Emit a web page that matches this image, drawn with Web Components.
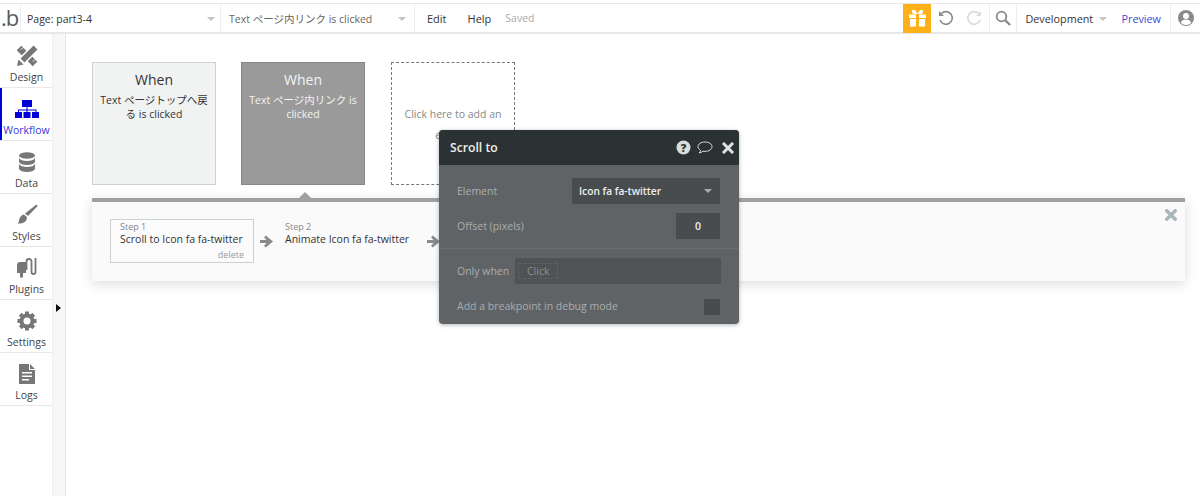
<!DOCTYPE html>
<html>
<head>
<meta charset="utf-8">
<style>
  html, body { margin: 0; height: 100%; background: #fff; overflow: hidden; }
  body { font-family: "Open Sans", "Noto Sans CJK JP", sans-serif; color: #333; }
</style>
</head>
<body>
<app-shell>
  <top-bar slot="top"></top-bar>
  <side-nav slot="side">
    <nav-item label="Design" icon="design"></nav-item>
    <nav-item label="Workflow" icon="workflow" active></nav-item>
    <nav-item label="Data" icon="data"></nav-item>
    <nav-item label="Styles" icon="styles"></nav-item>
    <nav-item label="Plugins" icon="plugins"></nav-item>
    <nav-item label="Settings" icon="settings"></nav-item>
    <nav-item label="Logs" icon="logs"></nav-item>
  </side-nav>
  <workflow-canvas slot="main">
    <event-card slot="events" title="When">Text ページトップへ戻る is clicked</event-card>
    <event-card slot="events" title="When" selected>Text ページ内リンク is clicked</event-card>
    <event-card slot="events" empty>Click here to add an event...</event-card>
    <step-panel slot="panel">
      <step-item step="Step 1" selected>Scroll to Icon fa fa-twitter</step-item>
      <step-item step="Step 2">Animate Icon fa fa-twitter</step-item>
    </step-panel>
    <action-dialog slot="dialog" title="Scroll to"></action-dialog>
  </workflow-canvas>
</app-shell>

<script>
const GRAY = '#777';
const ICONS = {
  design: `<svg width="22" height="22" viewBox="0 0 22 22"><path d="M3 3l16 16" stroke="${GRAY}" stroke-width="6.500"/><path d="M7 2.500l-2 2M11 6.500l-2 2M15 10.500l-2 2M19 14.500l-2 2" stroke="#fff" stroke-width="1"/><path d="M19 3L6 16" stroke="#fff" stroke-width="8.500"/><path d="M19.500 2.500L6.500 15.500" stroke="${GRAY}" stroke-width="5.500"/><path d="M1 21l1.500-6.500 5 5z" fill="${GRAY}"/></svg>`,
  workflow: `<svg width="24" height="20" viewBox="0 0 24 20"><g fill="#0000d8"><rect x="7" y="1" width="10" height="7"/><rect x="0" y="13" width="7" height="6"/><rect x="8.500" y="13" width="7" height="6"/><rect x="17" y="13" width="7" height="6"/><path d="M11.500 8h1v2.500h9V13h-1v-1.500h-8V13h-1v-1.500H4V13H3v-2.500h8.500z"/></g></svg>`,
  data: `<svg width="18" height="21" viewBox="0 0 18 21"><g fill="${GRAY}"><ellipse cx="9" cy="3.500" rx="8" ry="3.200"/><path d="M1 6c1 2 4 3 8 3s7-1 8-3v4c-1 2-4 3-8 3s-7-1-8-3z"/><path d="M1 12c1 2 4 3 8 3s7-1 8-3v5c-1 2-4 3-8 3s-7-1-8-3z"/></g></svg>`,
  styles: `<svg width="22" height="22" viewBox="0 0 22 22"><g fill="${GRAY}"><path d="M21 1c.6.400.6 1 .2 1.600L12 12l-3-2.500L19.500 1.200c.5-.4 1-.5 1.500-.2z"/><path d="M8 10.500l3 2.700c0 3.800-3 6.800-9.500 6.300 2-1.200 1-3.500 2.500-6 1-1.600 2.500-2.700 4-3z"/></g></svg>`,
  plugins: `<svg width="22" height="22" viewBox="0 0 22 22"><path fill="${GRAY}" d="M1 8q0-3 3-3h6v11H7v4.500H4V16H1z"/><path d="M10.500 13V4.500a2.500 2.500 0 0 1 5 0V15a2 2 0 0 0 4 0V1" fill="none" stroke="${GRAY}" stroke-width="1.800"/></svg>`,
  settings: `<svg width="20" height="20" viewBox="0 0 20 20"><circle cx="10" cy="10" r="5.500" fill="none" stroke="${GRAY}" stroke-width="4"/><g fill="${GRAY}">${[0, 45, 90, 135, 180, 225, 270, 315].map(a => `<rect x="8" y="0.500" width="4" height="4" transform="rotate(${a} 10 10)"/>`).join('')}</g></svg>`,
  logs: `<svg width="16" height="20" viewBox="0 0 16 20"><path fill="${GRAY}" fill-rule="evenodd" d="M0 0h10v6h6v14H0zM3 8v1.500h10V8zM3 11.500V13h10v-1.500zM3 15v1.500h7V15zM11 0l5 5h-5z"/></svg>`
};

class AppShell extends HTMLElement {
  constructor() {
    super();
    this.attachShadow({ mode: 'open' });
    this.shadowRoot.innerHTML = `
      <style>
        :host { display: block; width: 1200px; height: 496px; padding-top: 3px; box-sizing: border-box; background: #fff; }
        .body { display: flex; height: 462px; }
        .gutter { flex: none; width: 12px; background: #f7f7f7; border-right: 1px solid #e6e6e6; position: relative; }
        .gutter::after {
          content: ''; position: absolute; left: 3px; top: 270px;
          border-left: 5px solid #111; border-top: 4px solid transparent; border-bottom: 4px solid transparent;
        }
        .main { flex: 1; min-width: 0; }
      </style>
      <slot name="top"></slot>
      <div class="body">
        <slot name="side"></slot>
        <div class="gutter"></div>
        <div class="main"><slot name="main"></slot></div>
      </div>
    `;
  }
}
customElements.define('app-shell', AppShell);

class TopBar extends HTMLElement {
  constructor() {
    super();
    this.attachShadow({ mode: 'open' });
    this.shadowRoot.innerHTML = `
      <style>
        :host {
          display: flex; align-items: stretch; height: 31px; box-sizing: border-box;
          border-top: 1px solid #e8e8e8; border-bottom: 2px solid #e8e8e8;
          font-size: 11px; color: #333; background: #fff;
        }
        .logo { width: 21px; flex: none; box-sizing: border-box; border-right: 1px solid #eee;
          font: 400 22px/26px "Open Sans", sans-serif; color: #5a5a5a; padding-left: 1px; letter-spacing: -1px; }
        .drop { flex: none; display: flex; align-items: center; justify-content: space-between; box-sizing: border-box; border-right: 1px solid #eee; font-size: 10.500px; padding-top: 1px; }
        .page { width: 200px; padding-left: 6px; padding-right: 5px; }
        .event { width: 194px; padding-left: 8px; padding-right: 8px; color: #666; }
        .caret { width: 0; height: 0; border-left: 4px solid transparent; border-right: 4px solid transparent; border-top: 4px solid #c4c4c4; margin-top: 1px; }
        .menu { flex: none; }
        .edit { margin-left: 12px; }
        .help { margin-left: 21px; }
        .saved { margin-left: 14px; color: #aaa; font-size: 10.500px; }
        .menu, .saved { align-self: center; }
        .spacer { flex: 1; }
        .gift { flex: none; width: 28px; background: #fdb01a; display: flex; align-items: center; justify-content: center; margin-bottom: -1px; }
        .ico { flex: none; display: flex; align-items: center; justify-content: center; }
        .undo { width: 28px; margin-left: 1px; }
        .redo { width: 28px; }
        .search { width: 26px; margin-left: 1px; border-left: 1px solid #eee; border-right: 1px solid #eee; }
        .dev { flex: none; width: 96px; padding: 0 6px 0 8px; box-sizing: border-box; color: #333; display: flex; align-items: center; justify-content: space-between; font-size: 10.800px; }
        .preview { flex: none; align-self: center; color: #3f47d4; margin-left: 8px; font-size: 10.800px; }
        .user { flex: none; width: 29px; margin-left: 9px; border-left: 1px solid #eee; display: flex; align-items: center; justify-content: center; }
      </style>
      <div class="logo">.b</div>
      <div class="drop page"><span>Page: part3-4</span><i class="caret"></i></div>
      <div class="drop event"><span>Text ページ内リンク is clicked</span><i class="caret"></i></div>
      <span class="menu edit">Edit</span>
      <span class="menu help">Help</span>
      <span class="saved">Saved</span>
      <div class="spacer"></div>
      <div class="gift">
        <svg width="19" height="19" viewBox="0 0 19 19"><g fill="#fff"><path d="M1 5.500h7v3.500H1zM11 5.500h7v3.500h-7zM2 10h6v7.500H2zM11 10h6v7.500h-6z"/><path d="M9.500 5C8 1.500 6.500.500 5 .800 3.200 1.200 3.500 4.500 6 5zM9.500 5C11 1.500 12.500.500 14 .800c1.800.4 1.500 3.700-1 4.200z"/></g></svg>
      </div>
      <div class="ico undo"><svg width="16" height="16" viewBox="0 0 16 16"><path d="M3.500 3.500A6.300 6.300 0 1 1 2 10" fill="none" stroke="#8c8c8c" stroke-width="1.600"/><path d="M1 1v5h5z" fill="#8c8c8c"/></svg></div>
      <div class="ico redo"><svg width="16" height="16" viewBox="0 0 16 16"><path d="M12.500 3.500A6.300 6.300 0 1 0 14 10" fill="none" stroke="#dadada" stroke-width="1.600"/><path d="M15 1v5h-5z" fill="#dadada"/></svg></div>
      <div class="ico search"><svg width="16" height="16" viewBox="0 0 16 16"><circle cx="6.500" cy="6.500" r="4.800" fill="none" stroke="#8a8a8a" stroke-width="1.800"/><path d="M10 10l5 5" stroke="#8a8a8a" stroke-width="2.400"/></svg></div>
      <div class="dev"><span>Development</span><i class="caret"></i></div>
      <span class="preview">Preview</span>
      <div class="user"><svg width="16" height="16" viewBox="0 0 16 16"><circle cx="8" cy="8" r="8" fill="#8a8a8a"/><circle cx="8" cy="6" r="3" fill="#fff"/><path d="M2.800 13c.6-2.500 2.600-3.500 5.200-3.500s4.600 1 5.200 3.500A7 7 0 0 1 8 15a7 7 0 0 1-5.200-2z" fill="#fff"/></svg></div>
    `;
  }
}
customElements.define('top-bar', TopBar);

class SideNav extends HTMLElement {
  constructor() {
    super();
    this.attachShadow({ mode: 'open' });
    this.shadowRoot.innerHTML = `
      <style>
        :host { display: flex; flex-direction: column; flex: none; width: 52px; background: #fff; border-right: 1px solid #eee; padding-top: 1px; }
      </style>
      <slot></slot>
    `;
  }
}
customElements.define('side-nav', SideNav);

class NavItem extends HTMLElement {
  connectedCallback() {
    if (this.shadowRoot) return;
    this.attachShadow({ mode: 'open' });
    this.shadowRoot.innerHTML = `
      <style>
        :host { display: block; height: 53px; box-sizing: border-box; border-bottom: 1px solid #e8e8e8; position: relative; }
        .wrap { display: flex; flex-direction: column; align-items: center; height: 100%; padding-left: 1px; box-sizing: border-box; }
        .icon { height: 24px; margin-top: 9px; display: flex; align-items: center; justify-content: center; }
        .label { font-size: 10.500px; line-height: 14px; margin-top: 2px; color: #444; white-space: nowrap; }
        :host([active]) .label { color: #3a3ad8; }
        :host([active])::before { content: ''; position: absolute; left: 0; top: 0; bottom: 0; width: 2px; background: #0000d8; }
      </style>
      <div class="wrap">
        <div class="icon">${ICONS[this.getAttribute('icon')]}</div>
        <div class="label">${this.getAttribute('label')}</div>
      </div>
    `;
  }
}
customElements.define('nav-item', NavItem);

class WorkflowCanvas extends HTMLElement {
  constructor() {
    super();
    this.attachShadow({ mode: 'open' });
    this.shadowRoot.innerHTML = `
      <style>
        :host { display: block; position: relative; height: 100%; padding: 28px 15px 0 26px; box-sizing: border-box; }
        .events { display: flex; gap: 25px; }
        .panel { margin-top: 13px; }
        ::slotted([slot="dialog"]) { position: absolute; left: 373px; top: 96px; }
      </style>
      <div class="events"><slot name="events"></slot></div>
      <div class="panel"><slot name="panel"></slot></div>
      <slot name="dialog"></slot>
    `;
  }
}
customElements.define('workflow-canvas', WorkflowCanvas);

class EventCard extends HTMLElement {
  connectedCallback() {
    if (this.shadowRoot) return;
    this.attachShadow({ mode: 'open' });
    const title = this.getAttribute('title');
    this.shadowRoot.innerHTML = `
      <style>
        :host {
          display: block; width: 124px; height: 123px; box-sizing: border-box; text-align: center;
          border: 1px solid #c9d2d4; background: #f1f3f2; color: #333; padding: 0 5px;
          font-size: 10.500px; line-height: 14px;
        }
        :host([selected]) { background: #9a9a9a; border-color: #888; color: #f4f4f4; }
        :host([empty]) { background: #fff; border: 1px dashed #777; color: #888; padding: 41px 8px 0; line-height: 21px; margin-left: 1px; }
        .title { font-size: 14px; line-height: 20px; margin-top: 7px; margin-bottom: 3px; }
      </style>
      ${title ? `<div class="title">${title}</div>` : ''}
      <slot></slot>
    `;
  }
}
customElements.define('event-card', EventCard);

class StepPanel extends HTMLElement {
  constructor() {
    super();
    this.attachShadow({ mode: 'open' });
    this.shadowRoot.innerHTML = `
      <style>
        :host {
          display: block; position: relative; height: 83px; box-sizing: border-box;
          background: #fafafa; border-top: 4px solid #a0a0a0; padding: 17px 18px 0;
          box-shadow: 0 3px 12px rgba(0,0,0,.14);
        }
        .notch { position: absolute; left: 207px; top: -10px; border-left: 6px solid transparent; border-right: 6px solid transparent; border-bottom: 6px solid #a0a0a0; }
        .steps { display: flex; }
        .close { position: absolute; right: 8px; top: 7px; }
      </style>
      <i class="notch"></i>
      <div class="steps"><slot></slot></div>
      <svg class="close" width="12" height="12" viewBox="0 0 12 12"><path d="M1.800 1.800l8.400 8.400M10.200 1.800l-8.400 8.400" stroke="#a9b6ba" stroke-width="3.400" stroke-linecap="square"/></svg>
    `;
  }
}
customElements.define('step-panel', StepPanel);

class StepItem extends HTMLElement {
  connectedCallback() {
    if (this.shadowRoot) return;
    this.attachShadow({ mode: 'open' });
    const selected = this.hasAttribute('selected');
    this.shadowRoot.innerHTML = `
      <style>
        :host { display: flex; align-items: center; }
        .box { width: 144px; height: 44px; box-sizing: border-box; padding: 1px 9px 0; border: 1px solid transparent; position: relative; font-size: 10.500px; line-height: 14px; color: #333; white-space: nowrap; }
        :host([selected]) .box { border-color: #c9d2d4; background: #fbfbfb; }
        .num { font-size: 9px; line-height: 11px; color: #888; }
        .del { position: absolute; right: 9px; bottom: 2px; font-size: 9px; line-height: 11px; color: #999; }
        .arrow { margin: 0 11px 0 6px; flex: none; }
        :host(:not([selected])) .box { width: 143px; padding-left: 0; }
        :host(:not([selected])) .arrow { margin-left: 0; }
      </style>
      <div class="box">
        <div class="num">${this.getAttribute('step')}</div>
        <div><slot></slot></div>
        ${selected ? '<div class="del">delete</div>' : ''}
      </div>
      <svg class="arrow" width="13" height="13" viewBox="0 0 13 13"><path d="M0 5h6.500L4 2.300 5.800.600 13 6.500 5.800 12.400 4 10.700 6.500 8H0z" fill="#8a8a8a"/></svg>
    `;
  }
}
customElements.define('step-item', StepItem);

class ActionDialog extends HTMLElement {
  connectedCallback() {
    if (this.shadowRoot) return;
    this.attachShadow({ mode: 'open' });
    this.shadowRoot.innerHTML = `
      <style>
        :host {
          display: block; width: 300px; height: 194px; box-sizing: border-box; border-radius: 4px; overflow: hidden;
          background: #5f6366; color: #a9adaf; font-size: 10.500px; box-shadow: 0 1px 4px rgba(0,0,0,.3);
        }
        header { display: flex; align-items: center; height: 35px; padding: 0 5px 0 11px; background: #2b3233; color: #eef0f0; font-size: 12.200px; font-weight: 600; }
        header .t { flex: 1; }
        .q { margin-right: 6px; }
        .c { margin-right: 9px; }
        .row { display: flex; align-items: center; justify-content: space-between; padding: 0 19px 0 18px; }
        .r1 { margin-top: 13px; height: 26px; }
        .r2 { margin-top: 9px; height: 26px; }
        .r3 { margin-top: 9px; padding-top: 9px; padding-right: 18px; height: 26px; border-top: 1px solid #6a6e71; }
        .r4 { margin-top: 15px; height: 16px; }
        .r4 > span { margin-bottom: 2px; }
        .select { width: 148px; height: 26px; box-sizing: border-box; background: #484c4f; color: #eee; display: flex; align-items: center; justify-content: space-between; padding: 0 8px 0 7px; font-weight: 600; font-size: 10.200px; }
        .caret { width: 0; height: 0; border-left: 4px solid transparent; border-right: 4px solid transparent; border-top: 4px solid #aaa; }
        .num { width: 44px; height: 26px; background: #484c4f; color: #eee; font-weight: 600; display: flex; align-items: center; justify-content: center; }
        .cond { width: 206px; height: 26px; box-sizing: border-box; background: #4f5356; display: flex; align-items: center; padding-left: 3px; color: #8c9092; }
        .cond span { border: 1px dashed #5f6366; padding: 0 8px; line-height: 14px; width: 40px; box-sizing: border-box; }
        .check { width: 16px; height: 16px; background: #484c4f; }
      </style>
      <header>
        <span class="t">${this.getAttribute('title')}</span>
        <svg class="q" width="15" height="15" viewBox="0 0 15 15"><circle cx="7.500" cy="7.500" r="7" fill="#d8dcdc"/><text x="7.500" y="11.500" text-anchor="middle" font-family="Open Sans" font-weight="800" font-size="11" fill="#2b3233">?</text></svg>
        <svg class="c" width="16" height="13" viewBox="0 0 16 13"><path d="M8 1c4 0 7 2 7 4.700S12 10.400 8 10.400c-.7 0-1.400-.1-2-.2-1 .9-2.200 1.500-3.800 1.800.8-.8 1.300-1.700 1.400-2.700C2 8.400 1 7.200 1 5.700 1 3 4 1 8 1z" fill="none" stroke="#d8dcdc" stroke-width="1"/></svg>
        <svg width="12" height="12" viewBox="0 0 12 12"><path d="M2 2l8 8M10 2l-8 8" stroke="#dfe3e3" stroke-width="3" stroke-linecap="square"/></svg>
      </header>
      <div class="row r1"><span>Element</span><div class="select"><span>Icon fa fa-twitter</span><i class="caret"></i></div></div>
      <div class="row r2"><span>Offset (pixels)</span><div class="num">0</div></div>
      <div class="row r3"><span>Only when</span><div class="cond"><span>Click</span></div></div>
      <div class="row r4"><span>Add a breakpoint in debug mode</span><div class="check"></div></div>
    `;
  }
}
customElements.define('action-dialog', ActionDialog);
</script>
</body>
</html>
